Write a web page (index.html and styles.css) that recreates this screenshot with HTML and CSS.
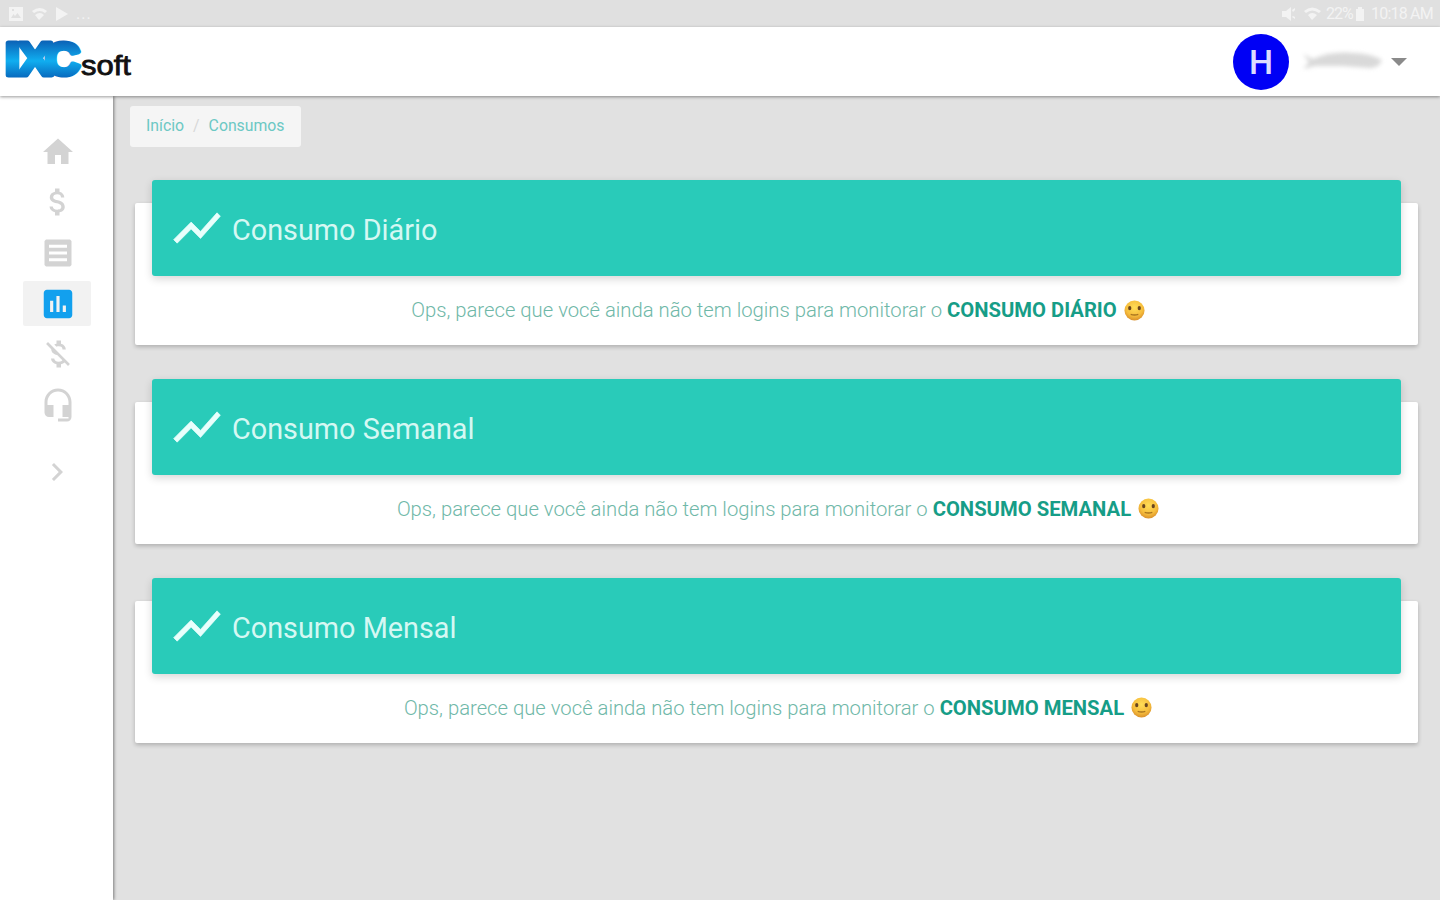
FILE: index.html
```html
<!DOCTYPE html>
<html lang="pt-BR">
<head>
    <meta charset="UTF-8">
    <meta name="viewport" content="width=device-width, initial-scale=1.0">
    <title>Consumos</title>
    <link rel="stylesheet" href="styles.css">
</head>
<body>
    <div class="statusbar">
        <div class="status-left">
            <svg width="16" height="16" viewBox="0 0 16 16"><path fill-rule="evenodd" d="M1 1h14v14H1zM3 12h10L9.500 7 7 10 5.500 8zM4 3v2h2V3z"/></svg>
            <svg width="17" height="14" viewBox="0 0 17 14"><path d="M1 4Q9-2 16 4l-2 2Q9 2 3 6zM4 8q5-4 9 0l-5 5z"/></svg>
            <svg width="14" height="16" viewBox="0 0 14 16"><path d="M1 1l12 7-12 7z"/></svg>
            <span class="dots">...</span>
        </div>
        <div class="status-right">
            <svg class="mute" width="13" height="14" viewBox="0 0 13 14"><path d="M0 4h4l5-4v14L4 10H0zM10 3l3-2v2l-2 2zM10 10l3 2v-2l-2-1z"/></svg>
            <svg class="wifi" width="17" height="14" viewBox="0 0 17 14"><path d="M0 4Q8-3 17 4l-2 2Q8 1 2 6zM4 8q4-4 9 0l-5 5z"/></svg>
            <span class="percent">22%</span>
            <svg class="battery" width="8" height="14" viewBox="0 0 8 14"><path d="M2 0h4v2h2v12H0V2h2z"/></svg>
            <span class="clock">10:18 AM</span>
        </div>
    </div>

    <header class="topbar">
        <svg class="logo" width="130" height="56" viewBox="0 0 130 56">
            <defs>
                <linearGradient id="logoBlue" gradientUnits="userSpaceOnUse" x1="0" y1="8" x2="0" y2="46">
                    <stop offset="0" stop-color="#0b5fb4"/>
                    <stop offset="0.550" stop-color="#10aef0"/>
                    <stop offset="1" stop-color="#0868bd"/>
                </linearGradient>
            </defs>
            <g class="logo-ixc">
                <text x="0" y="43" textLength="15" lengthAdjust="spacingAndGlyphs">I</text>
                <text x="13" y="43" textLength="34" lengthAdjust="spacingAndGlyphs">X</text>
                <text x="40" y="43" textLength="35" lengthAdjust="spacingAndGlyphs">C</text>
            </g>
            <text class="logo-soft" x="76" y="43" textLength="50" lengthAdjust="spacingAndGlyphs">soft</text>
        </svg>
        <div class="user">
            <div class="avatar">H</div>
            <svg class="user-name" width="86" height="26" viewBox="0 0 86 26"><path d="M4 7l10 5Q32 4 54 6q16 0 29 7-3 8-12 8l-28-2-27 0-12 3 6-7z"/></svg>
            <span class="caret"></span>
        </div>
    </header>

    <div class="layout">
        <nav class="sidebar">
            <a class="nav-item"><svg viewBox="0 0 24 24"><path d="M10 20v-6h4v6h5v-8h3L12 3 2 12h3v8z"/></svg></a>
            <a class="nav-item"><svg viewBox="0 0 24 24"><path d="M11.800 10.900c-2.270-.59-3-1.200-3-2.150 0-1.090 1.010-1.850 2.700-1.850 1.780 0 2.440.85 2.500 2.100h2.210c-.07-1.720-1.120-3.300-3.210-3.810V3h-3v2.160c-1.940.42-3.500 1.680-3.500 3.610 0 2.310 1.910 3.460 4.700 4.130 2.500.6 3 1.480 3 2.410 0 .69-.49 1.790-2.700 1.790-2.060 0-2.870-.92-2.980-2.100h-2.200c.12 2.190 1.760 3.420 3.680 3.830V21h3v-2.150c1.950-.37 3.500-1.500 3.500-3.550 0-2.840-2.430-3.810-4.700-4.400z"/></svg></a>
            <a class="nav-item"><svg viewBox="0 0 24 24"><path fill-rule="evenodd" d="M4 3h16l1 1v16l-1 1H4l-1-1V4zM6 6.500v2h12v-2zM6 11v2h12v-2zM6 15.500v2h12v-2z"/></svg></a>
            <a class="nav-item active"><svg viewBox="0 0 24 24"><path d="M19 3H5c-1.100 0-2 .9-2 2v14c0 1.100.9 2 2 2h14c1.100 0 2-.9 2-2V5c0-1.100-.9-2-2-2zM9 17H7v-7h2v7zm4 0h-2V7h2v10zm4 0h-2v-4h2v4z"/></svg></a>
            <a class="nav-item"><svg viewBox="0 0 24 24"><path d="M12.500 6.900c1.780 0 2.440.85 2.500 2.100h2.210c-.07-1.720-1.120-3.300-3.210-3.810V3h-3v2.160c-.53.12-1.030.3-1.480.54l1.470 1.470c.41-.17.91-.27 1.510-.27zM5.330 4.060L4.060 5.330 7.500 8.770c0 2.080 1.560 3.210 3.910 3.910l3.510 3.510c-.34.48-1.050.91-2.420.91-2.060 0-2.870-.92-2.980-2.100h-2.200c.12 2.190 1.760 3.420 3.680 3.830V21h3v-2.150c.96-.18 1.820-.55 2.450-1.120l2.220 2.220 1.270-1.270L5.330 4.060z"/></svg></a>
            <a class="nav-item"><svg viewBox="0 0 24 24"><path d="M12 1c-4.970 0-9 4.030-9 9v7c0 1.660 1.340 3 3 3h3v-8H5v-2c0-3.870 3.130-7 7-7s7 3.130 7 7v2h-4v8h4v1h-7v2h6c1.660 0 3-1.340 3-3V10c0-4.970-4.030-9-9-9z"/></svg></a>
            <a class="nav-item expand"><svg viewBox="0 0 24 24"><path d="M10 6L8.590 7.410 13.170 12l-4.580 4.590L10 18l6-6z"/></svg></a>
        </nav>

        <main class="content">
            <div class="breadcrumb"><a>Início</a><span>/</span><a>Consumos</a></div>

            <!-- face shared by the three messages -->
            <svg class="symbols">
                <defs>
                    <radialGradient id="faceFill" cx="0.500" cy="0.350" r="0.650">
                        <stop offset="0" stop-color="#ffdd57"/>
                        <stop offset="0.650" stop-color="#f6bd3c"/>
                        <stop offset="1" stop-color="#d9902c"/>
                    </radialGradient>
                </defs>
                <symbol id="face" viewBox="0 0 22 22">
                    <circle cx="11" cy="11" r="10.500" fill="url(#faceFill)"/>
                    <ellipse cx="6" cy="8.500" rx="1.700" ry="2.300" fill="#69451f"/>
                    <ellipse cx="16" cy="8.500" rx="1.700" ry="2.300" fill="#69451f"/>
                    <path d="M7 15q4 1.500 8 0" fill="none" stroke="#a8741f" stroke-width="1.400"/>
                </symbol>
            </svg>

            <section class="card">
                <div class="card-header">
                    <svg viewBox="0 0 24 24"><path d="M3.500 18.490l6-6.010 4 4L22 6.920l-1.410-1.410-7.090 7.970-4-4L2 16.990z"/></svg>
                    <h2>Consumo Diário</h2>
                </div>
                <p class="message">Ops, parece que você ainda não tem logins para monitorar o <strong>CONSUMO DIÁRIO</strong><svg class="face"><use href="#face"/></svg></p>
            </section>

            <section class="card">
                <div class="card-header">
                    <svg viewBox="0 0 24 24"><path d="M3.500 18.490l6-6.010 4 4L22 6.920l-1.410-1.410-7.090 7.970-4-4L2 16.990z"/></svg>
                    <h2>Consumo Semanal</h2>
                </div>
                <p class="message">Ops, parece que você ainda não tem logins para monitorar o <strong>CONSUMO SEMANAL</strong><svg class="face"><use href="#face"/></svg></p>
            </section>

            <section class="card">
                <div class="card-header">
                    <svg viewBox="0 0 24 24"><path d="M3.500 18.490l6-6.010 4 4L22 6.920l-1.410-1.410-7.090 7.970-4-4L2 16.990z"/></svg>
                    <h2>Consumo Mensal</h2>
                </div>
                <p class="message">Ops, parece que você ainda não tem logins para monitorar o <strong>CONSUMO MENSAL</strong><svg class="face"><use href="#face"/></svg></p>
            </section>
        </main>
    </div>
</body>
</html>
```

FILE: styles.css
```css
* {
    box-sizing: border-box;
}
body {
    margin: 0;
    height: 900px;
    display: flex;
    flex-direction: column;
    overflow: hidden;
    font-family: Roboto, "Liberation Sans", sans-serif;
    background: #e1e1e1;
}
.statusbar {
    height: 27px;
    flex: none;
    display: flex;
    justify-content: space-between;
    padding: 0 7px 0 8px;
    background: #e0e0e0;
    color: #f3f3f3;
    font-size: 16px;
}
.statusbar svg {
    fill: #f3f3f3;
}
.status-left, .status-right {
    display: flex;
    align-items: center;
}
.status-left {
    gap: 7px;
}
.dots {
    letter-spacing: 1px;
}
.mute { margin-right: 9px; }
.wifi { margin-right: 5px; }
.percent {
    width: 27px;
    letter-spacing: -1px;
}
.battery { margin: 0 7px 0 3px; }
.clock {
    width: 62px;
    white-space: nowrap;
    letter-spacing: -0.8px;
}
.topbar {
    height: 69px;
    flex: none;
    display: flex;
    justify-content: space-between;
    align-items: center;
    padding: 0 33px 0 5px;
    background: #fff;
    box-shadow: 0 1px 3px rgba(0,0,0,0.4);
    z-index: 1;
}
.logo {
    margin-bottom: 4px;
}
.logo-ixc {
    font: bold 46px "Liberation Sans", sans-serif;
    fill: url(#logoBlue);
    stroke: url(#logoBlue);
    stroke-width: 5px;
    stroke-linejoin: round;
}
.logo-soft {
    font: 28px "Liberation Sans", sans-serif;
    fill: #111;
    stroke: #111;
    stroke-width: 0.8px;
}
.user {
    display: flex;
    align-items: center;
}
.avatar {
    width: 56px;
    height: 56px;
    border-radius: 50%;
    background: #0000f5;
    color: #dcdcff;
    font-size: 34px;
    font-weight: 500;
    line-height: 57px;
    text-align: center;
}
.user-name {
    margin: 0 6px 4px 10px;
    fill: #d9d9d9;
    filter: blur(2px);
}
.caret {
    border: 8px solid transparent;
    border-top: 8px solid #8a8a8a;
    border-bottom: 0;
}
.layout {
    flex: 1;
    display: flex;
}
.sidebar {
    width: 113px;
    flex: none;
    padding: 33px 22px 0 23px;
    background: #fff;
    box-shadow: 1px 0 3px rgba(0,0,0,0.45);
    /* keep the shadow from reaching into the top bar */
    clip-path: inset(0 -6px 0 0);
}
.nav-item {
    height: 45px;
    margin-bottom: 5.7px;
    padding-left: 2px;
    display: flex;
    align-items: center;
    justify-content: center;
    border-radius: 2px;
}
.nav-item svg {
    width: 36px;
    height: 36px;
    fill: #d3d3d3;
}
.nav-item.active {
    background: #f2f2f2;
}
.nav-item.active svg {
    width: 38px;
    height: 38px;
    fill: #12a0ee;
}
.nav-item.expand {
    margin-top: 22px;
    padding-left: 0;
}
.content {
    flex: 1;
    padding: 10px 22px 0;
}
.breadcrumb {
    width: 171px;
    height: 41px;
    margin-left: -5px;
    padding-left: 16px;
    border-radius: 3px;
    background: #f5f5f5;
    color: #6cc8c4;
    font-size: 15.8px;
    line-height: 39px;
    white-space: nowrap;
}
.breadcrumb span {
    margin: 0 9px;
    color: #d8d8d8;
}
.symbols {
    display: block;
    width: 0;
    height: 0;
}
.card {
    height: 142px;
    margin-bottom: 56.8px;
    border-radius: 2px;
    background: #fff;
    box-shadow: 0 2px 4px rgba(0,0,0,0.22);
}
.symbols + .card {
    margin-top: 56px;
}
.card-header {
    position: relative;
    top: -23px;
    height: 96px;
    margin: 0 17px;
    padding-left: 17px;
    display: flex;
    align-items: center;
    border-radius: 3px;
    background: #29cbb9;
    box-shadow: 0 3px 8px rgba(0,0,0,0.16);
}
.card-header svg {
    width: 56px;
    height: 56px;
    fill: #e8fffc;
    stroke: #e8fffc;
    stroke-width: 0.3px;
}
.card-header h2 {
    margin: 4px 0 0 7px;
    color: #d5f8f3;
    font-size: 28.8px;
    font-weight: 400;
}
.message {
    display: flex;
    align-items: center;
    justify-content: center;
    margin: -1px 0 0 3px;
    color: #6fb8a8;
    font-size: 20.25px;
    font-weight: 300;
    line-height: 24px;
    white-space: pre;
}
.message strong {
    color: #169d87;
    font-weight: 700;
}
.face {
    width: 21px;
    height: 21px;
    margin-left: 7px;
}
```
